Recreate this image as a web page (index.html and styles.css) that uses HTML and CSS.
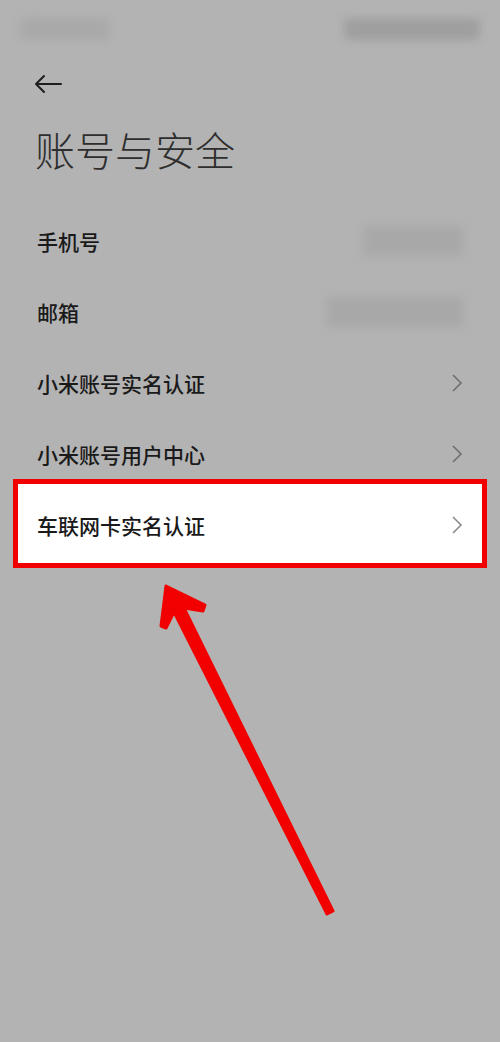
FILE: index.html
```html
<!DOCTYPE html>
<html lang="zh-CN">
<head>
  <meta charset="UTF-8">
  <meta name="viewport" content="width=device-width, initial-scale=1.0">
  <title>账号与安全</title>
  <link rel="stylesheet" href="styles.css">
</head>
<body>
  <div class="tela">
    <div class="status">
      <span class="borrao esquerda"></span>
      <span class="borrao direita"></span>
    </div>

    <div class="topo">
      <svg class="voltar" width="28" height="20" viewBox="0 0 28 20">
        <path d="M2 10 H27 M10 2 L2 10 L10 18" fill="none" stroke="#1e1e1e" stroke-width="2" stroke-linecap="round" stroke-linejoin="round"/>
      </svg>
      <h1 class="titulo">账号与安全</h1>
    </div>

    <div class="lista">
      <div class="item">
        <span class="nome">手机号</span>
        <span class="valor telefone"></span>
      </div>
      <div class="item">
        <span class="nome">邮箱</span>
        <span class="valor email"></span>
      </div>
      <div class="item">
        <span class="nome">小米账号实名认证</span>
        <svg class="seta" width="12" height="18" viewBox="0 0 12 18"><path d="M2 1 L10 9 L2 17" fill="none" stroke="#6e6e6e" stroke-width="1.6"/></svg>
      </div>
      <div class="item">
        <span class="nome">小米账号用户中心</span>
        <svg class="seta" width="12" height="18" viewBox="0 0 12 18"><path d="M2 1 L10 9 L2 17" fill="none" stroke="#6e6e6e" stroke-width="1.6"/></svg>
      </div>
      <div class="item destaque">
        <span class="nome">车联网卡实名认证</span>
        <svg class="seta" width="12" height="18" viewBox="0 0 12 18"><path d="M2 1 L10 9 L2 17" fill="none" stroke="#8a8a8a" stroke-width="1.6"/></svg>
      </div>
    </div>

    <!-- seta vermelha de anotação -->
    <svg class="anotacao" width="500" height="1042" viewBox="0 0 500 1042">
      <path d="M166 586 L205 605 L203 611 L184 608 L333 911 L327 914 L174 612 L166 628 L161 626 Z"
            fill="#f20000" stroke="#f20000" stroke-width="3" stroke-linejoin="round"/>
    </svg>
  </div>
</body>
</html>
```

FILE: styles.css
```css
body {
  margin: 0;
  background-color: #b3b3b3;
  font-family: "Noto Sans CJK SC", "Noto Sans", sans-serif;
}

.tela {
  position: relative;
  width: 500px;
  height: 1042px;
  overflow: hidden;
}

.status {
  height: 58px;
  box-sizing: border-box;
  padding: 18px 20px 0 20px;
  display: flex;
  justify-content: space-between;
}

.borrao {
  display: block;
  height: 22px;
  border-radius: 6px;
  filter: blur(4px);
}

.borrao.esquerda {
  width: 90px;
  background-color: #a9a9a9;
}

.borrao.direita {
  width: 136px;
  background-color: #9f9f9f;
}

.topo {
  padding: 0 35px;
}

.voltar {
  display: block;
  margin: 16px 0 0 -1px;
}

.titulo {
  margin: 35px 0 0 0;
  font-size: 40px;
  line-height: 40px;
  font-weight: 300;
  color: #2e2e2e;
  letter-spacing: 0;
}

.lista {
  margin-top: 36px;
}

.item {
  height: 71px;
  box-sizing: border-box;
  padding: 0 37px;
  display: flex;
  align-items: center;
  justify-content: space-between;
}

.nome {
  font-size: 21px;
  font-weight: 500;
  color: #1a1a1a;
}

.valor {
  display: block;
  height: 30px;
  background-color: #a8a8a8;
  border-radius: 4px;
  filter: blur(5px);
}

.valor.telefone {
  width: 100px;
}

.valor.email {
  width: 136px;
}

.seta {
  display: block;
}

.item.destaque {
  height: 89px;
  margin: -10px 13px 0 13px;
  padding: 3px 19px 0 19px;
  border: 5px solid #f20000;
  background-color: #fff;
}

.anotacao {
  position: absolute;
  left: 0;
  top: 0;
  pointer-events: none;
}
```
